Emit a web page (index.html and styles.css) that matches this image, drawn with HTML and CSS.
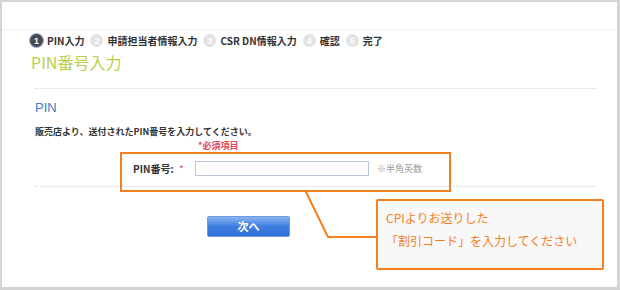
FILE: index.html
```html
<!DOCTYPE html>
<html lang="ja">
<head>
    <meta charset="UTF-8">
    <meta name="viewport" content="width=device-width, initial-scale=1.0">
    <title>PIN番号入力</title>
    <link rel="stylesheet" href="styles.css">
</head>
<body>
    <div class="frame">
        <!-- Step navigation -->
        <div class="steps">
            <span class="step current"><span class="num">1</span>PIN入力</span>
            <span class="step"><span class="num">2</span>申請担当者情報入力</span>
            <span class="step"><span class="num">3</span>CSR DN情報入力</span>
            <span class="step"><span class="num">4</span>確認</span>
            <span class="step"><span class="num">5</span>完了</span>
        </div>

        <h1>PIN番号入力</h1>
        <div class="dotted"></div>

        <div class="content">
            <h2>PIN</h2>
            <p class="lead">販売店より、送付されたPIN番号を入力してください。</p>

            <div class="required-note">*必須項目</div>
            <div class="field">
                <label for="pin">PIN番号:</label>
                <span class="mark">*</span>
                <input type="text" id="pin" name="pin">
                <span class="hint">※半角英数</span>
            </div>
        </div>
        <div class="dotted"></div>

        <div class="actions">
            <button type="button">次へ</button>
        </div>

        <!-- Annotation over the form -->
        <div class="highlight"></div>
        <svg class="connector" width="620" height="290" viewBox="0 0 620 290">
            <polyline points="305,190 328,237 377,237" fill="none" stroke="#f47f1f" stroke-width="2"/>
        </svg>
        <div class="callout">
            CPIよりお送りした<br>
            「割引コード」を入力してください
        </div>
    </div>
</body>
</html>
```

FILE: styles.css
```css
body {
    margin: 0;
    font-family: "Noto Sans CJK JP", "Noto Sans", sans-serif;
    background-color: #fff;
}

.frame {
    position: relative;
    width: 620px;
    height: 290px;
    box-sizing: border-box;
    border: 2px solid #d4d4d4;
    border-right-width: 3px;
    border-bottom-width: 3px;
    background-color: #fff;
    overflow: hidden;
}

.steps {
    display: flex;
    align-items: center;
    gap: 6px;
    margin-top: 27px;
    padding: 3px 0 0 28px;
    border-top: 1px solid #f1f1f1;
    height: 15px;
}

.step {
    display: flex;
    align-items: center;
    gap: 4px;
    font-size: 10px;
    font-weight: bold;
    color: #333;
}

.num {
    display: inline-flex;
    justify-content: center;
    align-items: center;
    width: 13px;
    height: 13px;
    border-radius: 50%;
    background-color: #e2e2e2;
    color: #fff;
    font-family: "Liberation Sans", sans-serif;
    font-size: 9px;
    font-weight: bold;
}

.step.current .num {
    background-color: #4a4a4a;
    box-shadow: 0 0 0 1px #8fb0d8;
}

h1 {
    margin: 3px 0 0 29px;
    font-size: 16px;
    font-weight: normal;
    line-height: 22px;
    color: #b9cf4a;
}

.dotted {
    margin: 0 20px 0 33px;
    border-top: 1px dotted #d8d8d8;
}

h1 + .dotted {
    margin-top: 15px;
}

.content {
    padding-left: 33px;
}

h2 {
    margin: 11px 0 0;
    font-size: 13px;
    font-weight: normal;
    line-height: 16px;
    color: #3b7cc9;
    font-family: "Liberation Sans", sans-serif;
}

.lead {
    margin: 10px 0 0;
    font-size: 9px;
    line-height: 12px;
    color: #333;
    font-weight: bold;
}

.required-note {
    margin: 3px 0 0 163px;
    font-size: 9px;
    line-height: 10px;
    font-weight: bold;
    color: #e0475a;
}

.field {
    display: flex;
    align-items: center;
    height: 28px;
    margin: 3px 0 4px 98px;
    font-size: 10px;
    color: #333;
}

.field label {
    font-weight: bold;
    width: 46px;
}

.mark {
    color: #e0475a;
    width: 16px;
}

.field input {
    width: 168px;
    height: 11px;
    border: 1px solid #b8c6da;
    padding: 1px 2px;
    margin-right: 8px;
}

.hint {
    color: #999;
    font-size: 9px;
}

.actions {
    margin: 25px 0 0 205px;
}

.actions button {
    width: 83px;
    height: 21px;
    border: 1px solid #6a9ae0;
    border-radius: 2px;
    background: linear-gradient(#8ab4f2, #3f7ee0 50%, #2f6fd8);
    color: #fff;
    font-family: "Noto Sans CJK JP", sans-serif;
    font-size: 11px;
    font-weight: bold;
    padding: 0;
}

.highlight {
    position: absolute;
    left: 118px;
    top: 150px;
    width: 327px;
    height: 36px;
    border: 2px solid #f47f1f;
}

.connector {
    position: absolute;
    left: -2px;
    top: -2px;
}

.callout {
    position: absolute;
    left: 374px;
    top: 197px;
    width: 216px;
    height: 62px;
    padding: 5px 0 0 8px;
    border: 2px solid #f47f1f;
    border-radius: 2px;
    background-color: #f8f8f8;
    color: #f47f1f;
    font-size: 12px;
    line-height: 23px;
}
```
